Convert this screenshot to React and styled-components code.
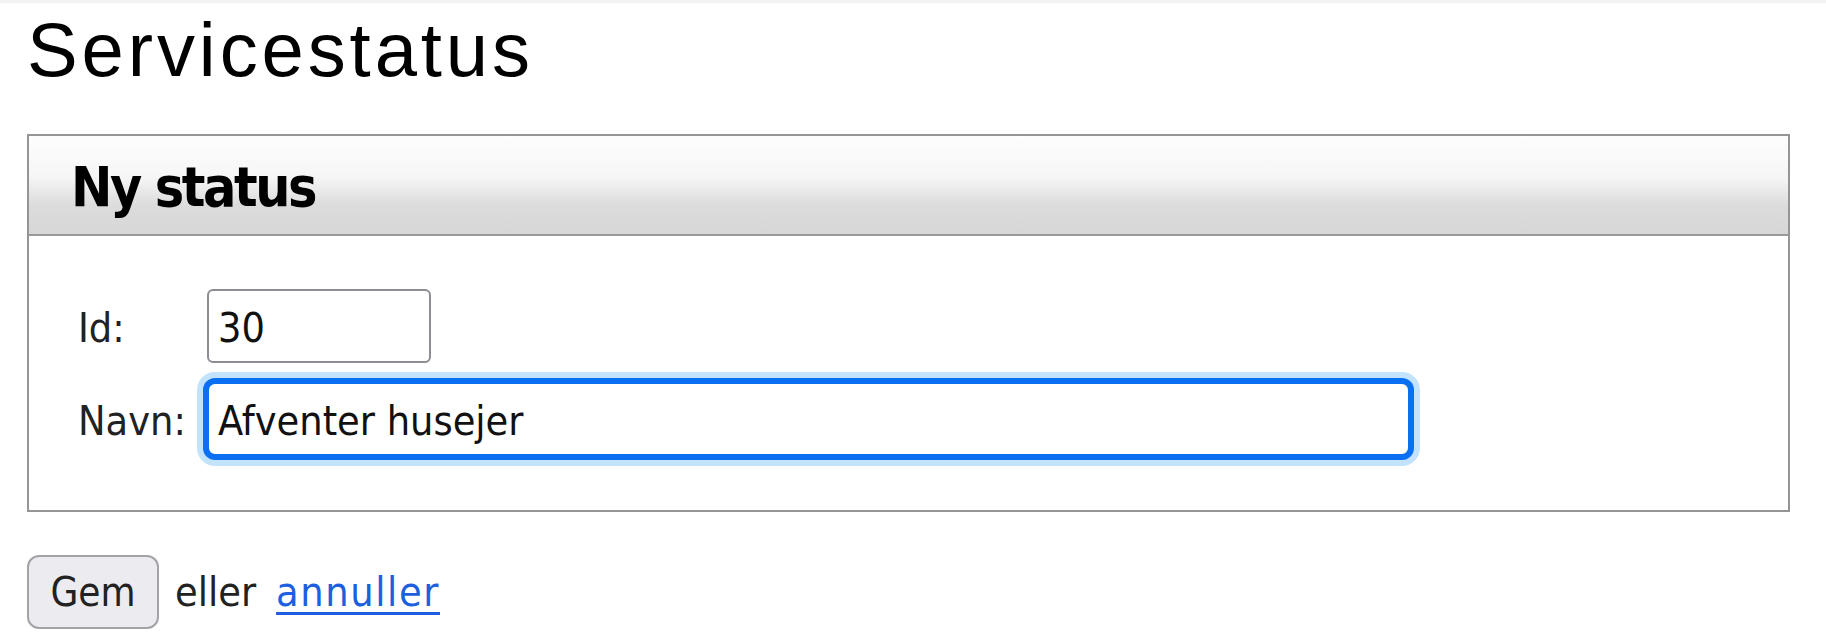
import React from "react";
import styled, { createGlobalStyle } from "styled-components";

const GlobalStyle = createGlobalStyle`
  * {
    box-sizing: border-box;
  }
  html,
  body {
    margin: 0;
    padding: 0;
    background: #fff;
  }
  body {
    width: 1826px;
    height: 642px;
    overflow: hidden;
    font-family: "DejaVu Sans Condensed", "DejaVu Sans", sans-serif;
    font-stretch: condensed;
    color: #222;
  }
`;

const Page = styled.div`
  border-top: 3px solid #f2f2f2;
  padding: 0 36px 0 27px;
`;

const Title = styled.h1`
  margin: 9px 0 46px;
  font-family: "Liberation Sans", Arial, sans-serif;
  font-stretch: normal;
  font-weight: 400;
  font-size: 76px;
  line-height: 76px;
  letter-spacing: 3.9px;
  color: #000;
`;

const Panel = styled.section`
  border: 2px solid #959595;
`;

const PanelHeader = styled.div`
  height: 100px;
  border-bottom: 2px solid #999;
  background: linear-gradient(
    to bottom,
    #fdfdfd 0%,
    #f6f6f6 42%,
    #dcdcdc 70%,
    #d7d7d7 100%
  );
`;

const PanelTitle = styled.h2`
  margin: 0;
  padding: 4px 0 0 42px;
  font-size: 55px;
  line-height: 94px;
  font-weight: 700;
  letter-spacing: -2.4px;
  color: #000;
`;

const PanelBody = styled.div`
  padding: 53px 0 54px 49px;
`;

const Form = styled.form`
  display: grid;
  grid-template-columns: 129px auto;
  row-gap: 19px;
  align-items: baseline;
  justify-items: start;
`;

const Label = styled.label`
  font-size: 41px;
  color: #222;
`;

const Input = styled.input`
  width: ${(props) => props.$width}px;
  height: 74px;
  padding: 4px 9px 0;
  font-family: inherit;
  font-stretch: condensed;
  font-size: 41px;
  color: #111;
  caret-color: #000;
  background: #fff;
  outline: none;
  border: 2px solid ${(props) => (props.$focused ? "#0b6ff2" : "#8c8c92")};
  border-radius: ${(props) => (props.$focused ? "8px" : "6px")};
  box-shadow: ${(props) =>
    props.$focused ? "0 0 0 4px #0b6ff2, 0 0 0 10px #c3e3fc" : "none"};
`;

const Actions = styled.div`
  margin-top: 43px;
  display: flex;
  align-items: baseline;
  font-size: 41px;
`;

const Button = styled.button`
  width: 132px;
  height: 74px;
  margin-right: 16px;
  padding: 0;
  font-family: inherit;
  font-stretch: condensed;
  font-size: 40px;
  color: #222;
  background: #ececf0;
  border: 2px solid #a2a2a8;
  border-radius: 12px;
`;

const Text = styled.span`
  color: #222;
  margin-right: 20px;
`;

const Link = styled.a`
  color: #1d5fe0;
  letter-spacing: 1.6px;
  text-decoration: underline;
  text-decoration-thickness: 3px;
  text-underline-offset: 6px;
  cursor: pointer;
`;

function App() {
  return (
    <>
      <GlobalStyle />
      <Page>
        <Title>Servicestatus</Title>
        <Panel>
          <PanelHeader>
            <PanelTitle>Ny status</PanelTitle>
          </PanelHeader>
          <PanelBody>
            <Form onSubmit={(e) => e.preventDefault()}>
              <Label htmlFor="status-id">Id:</Label>
              <Input id="status-id" $width={224} defaultValue="30" />
              <Label htmlFor="status-navn">Navn:</Label>
              <Input
                id="status-navn"
                $width={1203}
                $focused
                defaultValue="Afventer husejer"
                autoFocus
              />
            </Form>
          </PanelBody>
        </Panel>
        <Actions>
          <Button type="button">Gem</Button>
          <Text>eller</Text>
          <Link>annuller</Link>
        </Actions>
      </Page>
    </>
  );
}

export default App;
